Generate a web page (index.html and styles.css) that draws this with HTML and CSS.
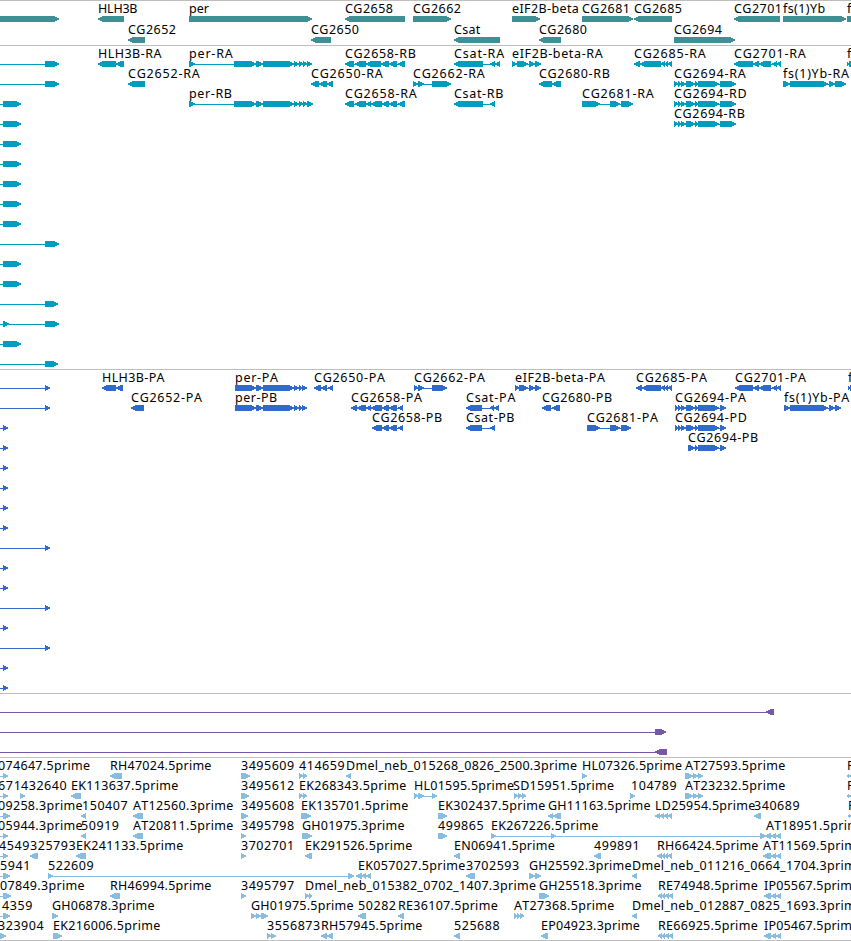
FILE: index.html
```html
<!DOCTYPE html>
<html lang="en">
<head>
<meta charset="utf-8">
<title>Genome browser</title>
<link rel="stylesheet" href="styles.css">
</head>
<body>
<main class="browser">
<section class="track genes" data-track="genes"></section>
<section class="track transcripts" data-track="transcripts"></section>
<section class="track proteins" data-track="proteins"></section>
<section class="track insertions" data-track="insertions"></section>
<section class="track ests" data-track="ests"></section>
</main>
<script src="tracks.js"></script>
</body>
</html>
```
FILE: styles.css
```css
body { margin: 0; background: #fff; overflow: hidden; }
.browser { display: flex; flex-direction: column; width: 851px; height: 940px; border-bottom: 1px solid #bebebe; }
.track { flex: none; box-sizing: border-box; border-top: 1px solid #bebebe; overflow: hidden; }
.track svg { display: block; }
.genes { height: 45px; color: #408f94; }
.transcripts { height: 324px; color: #009dbf; }
.proteins { height: 324px; color: #306bcb; }
.insertions { height: 64px; color: #7957a8; }
.ests { height: 183px; color: #89bddf; }
.glyph { fill: currentColor; shape-rendering: crispEdges; }
.label { fill: #000; font: 12.5px "Noto Sans", "DejaVu Sans", sans-serif; font-kerning: none; }
```
FILE: tracks.js
```js
// One feature per line: row, strand, label[@x], optional ~x (intron line start), exon spans.
// A label of "." draws no text.
const tracks = {
  genes: { pitch: 21, data: `
0 > . 0-59
0 < HLH3B 98-124
0 > per 189-312
0 < CG2658 345-405
0 > CG2662 413-451
0 > eIF2B-beta 512-540
0 > CG2681 582-633
0 < CG2685 634-672
0 < CG2701 734-780
0 > fs(1)Yb 783-846
0 > f 847-900
1 < CG2652 128-145
1 < CG2650 311-331
1 < Csat 454-500
1 < CG2680 539-561
1 > CG2694 674-735` },
  transcripts: { pitch: 20, data: `
0 > . ~0 45-59
1 > . ~0 45-59
2 > . ~0 3-21
3 > . ~0 3-21
4 > . ~0 3-21
5 > . ~0 3-21
6 > . ~0 3-21
7 > . ~0 3-21
8 > . ~0 3-21
9 > . ~0 45-59
10 > . ~0 3-21
11 > . ~0 3-21
12 > . ~0 45-58
13 > . ~0 3-9 45-59
14 > . ~0 3-21
15 > . ~0 45-58
0 < HLH3B-RA 98-116 116-124
0 > per-RA 189-195 234-256 256-263 263-294 294-299 299-303 303-307 307-312
0 < CG2658-RB 345-354 355-366 366-381 381-389 389-397 398-405
0 < Csat-RA 454-483 490-495 495-500
0 > eIF2B-beta-RA 512-517 517-528 529-535 535-541
0 < CG2685-RA 634-640 640-661 661-665 665-668 668-672
0 < CG2701-RA 734-753 753-759 759-771 772-777 777-781
0 > f 847-849 849-900
1 < CG2652-RA 128-145
1 < CG2650-RA 311-319 319-327 327-333
1 > CG2662-RA 413-418 418-424 432-451
1 < CG2680-RB 539-552 552-561
1 > CG2694-RA 674-678 678-681 681-686 686-695 695-698 698-719 720-736
1 > fs(1)Yb-RA 783-790 790-828 829-835 835-846
2 > per-RB 189-195 234-256 256-263 263-294 294-299 299-303 303-307 307-313
2 < CG2658-RA 345-354 355-366 366-371 371-382 382-389 389-397 398-405
2 < Csat-RB 454-483 490-495
2 > CG2681-RA 582-600 610-620 621-633
2 > CG2694-RD 674-678 678-681 681-686 686-695 695-698 698-719 720-736
3 > CG2694-RB 674-678 678-681 681-686 686-695 695-698 698-719 720-736` },
  proteins: { pitch: 20, data: `
0 > . ~0 45-50
1 > . ~0 45-50
2 > . ~0 3-8
3 > . ~0 3-8
4 > . ~0 3-8
5 > . ~0 3-8
6 > . ~0 3-8
7 > . ~0 3-8
8 > . ~0 45-50
9 > . ~0 3-8
10 > . ~0 3-8
11 > . ~0 45-50
12 > . ~0 3-8
13 > . ~0 45-50
14 > . ~0 3-8
15 > . ~0 3-8
0 < HLH3B-PA 102-116 116-123
0 > per-PA 235-256 256-263 263-294 294-299 299-302 302-307
0 < CG2650-PA 314-321 321-327 328-333
0 > CG2662-PA 414-418 418-424 432-447
0 > eIF2B-beta-PA 515-519 519-528 529-535 535-541
0 < CG2685-PA 636-642 642-661 661-665 665-668 668-672
0 < CG2701-PA 735-753 753-759 759-771 772-777 777-781
0 > f 848-850 850-900
1 < CG2652-PA 131-144
1 > per-PB 235-256 256-263 263-294 294-299 299-302 302-307
1 < CG2658-PA 351-357 357-366 366-371 371-382 382-389 389-397 398-403
1 < Csat-PA 466-482 490-494 494-499
1 < CG2680-PB 542-551 552-560
1 > CG2694-PA 675-678 678-681 681-686 686-695 695-698 698-719 720-726
1 > fs(1)Yb-PA 784-790 790-828 829-835 835-841
2 < CG2658-PB 372-382 382-389 389-397 398-403
2 < Csat-PB 466-482 490-495
2 > CG2681-PA 587-600 610-620 621-631
2 > CG2694-PD 675-678 678-681 681-686 686-695 695-698 698-719 720-726
3 > CG2694-PB 688-695 695-698 698-719 720-726` },
  insertions: { pitch: 20, data: `
0 < . ~0 766-774
1 > . ~0 655-666
2 < . ~0 655-667` },
  ests: { pitch: 20, data: `
0 > 074647.5prime@-2 ~0 3-8
0 < RH47024.5prime 110-122
0 > 3495609 241-250
0 > 414659 299-303 303-307
0 < Dmel_neb_015268_0826_2500.3prime 346-351
0 > HL07326.5prime 582-587
0 > AT27593.5prime 685-693 693-698 698-703
0 < R 847-849 849-900
1 > 671@-2 ~0 3-8
1 > 432640@21 20-25
1 < EK113637.5prime 71-81
1 > 3495612 241-249
1 > EK268343.5prime 299-303 303-307
1 > HL01595.5prime 414-418 418-424 432-437
1 > SD15951.5prime@513 514-518 518-522 522-526
1 > 104789@631 630-635
1 > AT23232.5prime 685-693 693-698 698-703
1 < R 847-849 849-900
2 > 09258.3prime@-2 ~0 3-10
2 < 150407@82 81-86
2 < AT12560.3prime 133-143
2 > 3495608 241-248
2 > EK135701.5prime 301-311
2 > EK302437.5prime 438-447
2 < GH11163.5prime 548-553 553-561
2 < LD25954.5prime 655-660 660-664 664-668 668-672
2 < 340689 754-761
2 < R 848-850 850-900
3 > 05944.3prime@-2 ~0 3-8
3 < 50919 81-86
3 < AT20811.5prime 133-143
3 > 3495798 241-246
3 > GH01975.3prime 302-312
3 > 499865 438-447
3 > EK267226.5prime 491-496 551-556 760-766
3 < AT18951.5prime@766 765-771 771-776 776-781
4 > 4549@-1 ~0 3-8
4 < 325793 30-38
4 < EK241133.5prime 76-86
4 > 3702701 241-246
4 < EK291526.5prime 305-312
4 < EN06941.5prime 454-460
4 < 499891 594-601
4 < RH66424.5prime 657-662 662-665 665-668 668-672
4 < AT11569.5prime 763-771 771-776 776-781
5 > 5941@0 ~0 3-10
5 > 522609 48-53 348-354
5 < EK057027.5prime@358 356-362 362-366 366-371
5 < 3702593 466-475
5 > GH25592.3prime 529-535 535-541
5 < Dmel_neb_011216_0664_1704.3prime 632-637
6 > 07849.3prime@0 ~0 3-11
6 < RH46994.5prime 110-120
6 > 3495797 241-246
6 > Dmel_neb_015382_0702_1407.3prime 305-309 309-312
6 > GH25518.3prime 539-549
6 < RE74948.5prime 658-662 662-665 665-669 669-673
6 < IP05567.5prime 764-771 771-776 776-781
7 > 4359@2 ~0 3-10
7 > GH06878.3prime 52-58
7 > GH01975.5prime 251-256 256-261 261-268
7 < 50282 358-366
7 < RE36107.5prime 398-404
7 > AT27368.5prime 514-517 517-520 520-524
7 < Dmel_neb_012887_0825_1693.3prime 632-637
8 > 323904@-2 0-6
8 > EK216006.5prime 53-62
8 > 3556873 267-271 271-276
8 < RH57945.5prime 321-327 327-333
8 < 525688 454-460
8 < EP04923.3prime 541-548
8 < RE66925.5prime 658-662 662-665 665-669 669-673
8 < IP05467.5prime 764-771 771-776 776-781` }
};

const NS = "http://www.w3.org/2000/svg";

// Label advance widths in pixels; characters not listed use the digit width.
const advances = {
  "-": 7.6, ".": 3.9, "(": 4.6, ")": 4.6, "_": 6.1,
  A: 8.3, B: 7.4, C: 8.4, D: 9.1, E: 7.2, F: 6.8, G: 9.1, H: 8.9, I: 3.5, K: 8, L: 6.7,
  N: 9, P: 7.2, R: 8, S: 7.5, T: 7.6, Y: 7.4,
  a: 7.2, b: 7.6, e: 7.3, f: 4.2, i: 3.5, l: 3.4, m: 11.6, n: 7.5, p: 7.6, r: 5, s: 6.2, t: 4.5
};

function labelWidth(text) {
  let width = 0;
  for (const ch of text) width += advances[ch] || 7.6;
  return width;
}

function add(parent, name, attrs) {
  const el = document.createElementNS(NS, name);
  for (const key in attrs) el.setAttribute(key, attrs[key]);
  parent.appendChild(el);
  return el;
}

// Exon box, six pixels tall, with rounded shoulders tapering towards the strand direction.
function exonPath(a, b, top, strand) {
  const taper = Math.min(5, b - a);
  const back = strand === ">" ? a : b;
  const tip = strand === ">" ? b : a;
  const s = strand === ">" ? -1 : 1;
  return `M${back} ${top}H${tip + s * taper}L${tip + s * taper * 0.4} ${top + 1.3}L${tip} ${top + 2.3}V${top + 3.6}` +
    `L${tip + s * taper * 0.5} ${top + 4.8}L${tip + s * taper} ${top + 6}H${back}Z`;
}

for (const section of document.querySelectorAll("[data-track]")) {
  const { pitch, data } = tracks[section.dataset.track];
  const svg = add(section, "svg", { width: 851, height: section.clientHeight });
  for (const line of data.trim().split("\n")) {
    const [row, strand, tag, ...rest] = line.split(" ");
    const start = rest[0][0] === "~" ? Number(rest.shift().slice(1)) : null;
    const spans = rest.map(s => s.split("-").map(Number));
    const top = 15 + row * pitch;
    const from = start === null ? spans[0][0] : start;
    const to = spans[spans.length - 1][1];
    const d = spans.map(([a, b]) => exonPath(a, b, top, strand)).join("");
    add(svg, "path", { class: "glyph", d });
    add(svg, "rect", { class: "glyph", x: from, y: top + 3, width: to - from, height: 1 });
    if (tag !== ".") {
      const [text, x] = tag.split("@");
      add(svg, "text", {
        class: "label", x: x === undefined ? from : x, y: top - 3, textLength: labelWidth(text).toFixed(1)
      }).textContent = text;
    }
  }
}
```
